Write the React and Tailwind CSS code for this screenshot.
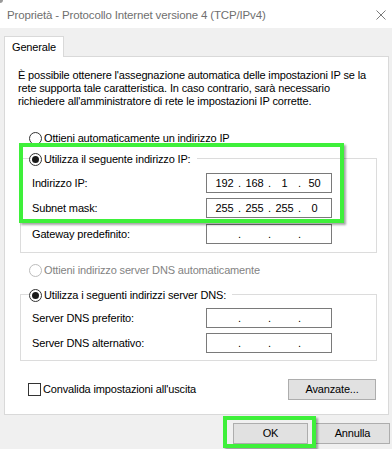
import React from 'react';

const dlg = { fontFamily: '"Liberation Sans", Arial, sans-serif' };

function Radio({ checked, disabled }) {
  return (
    <span
      className={`flex h-[13px] w-[13px] shrink-0 items-center justify-center rounded-full border bg-white ${
        disabled ? 'border-[#bcbcbc]' : 'border-[#333333]'
      }`}
    >
      {checked && <span className="h-[7px] w-[7px] rounded-full bg-[#1a1a1a]" />}
    </span>
  );
}

function IpField({ value }) {
  const parts = value ? value.split('.') : ['', '', '', ''];
  return (
    <div className="flex h-[20px] w-[126px] items-center border border-[#7a7a7a] bg-white pl-[5px] text-[11px] text-black">
      {parts.map((p, i) => (
        <React.Fragment key={i}>
          <span className="w-[25px] text-center">{p}</span>
          {i < 3 && <span className="w-[5px] text-center">.</span>}
        </React.Fragment>
      ))}
    </div>
  );
}

function Row({ label, value, className = '' }) {
  return (
    <div className={`flex items-center justify-between pl-[11px] pr-[44px] ${className}`}>
      <span>{label}</span>
      <IpField value={value} />
    </div>
  );
}

function Legend({ children, disabled, checked }) {
  return (
    <div className="-mt-[7px] ml-[8px] flex h-[14px] w-fit items-center bg-white pr-[6px]">
      <Radio checked={checked} disabled={disabled} />
      <span className="ml-[2px] whitespace-nowrap">{children}</span>
    </div>
  );
}

function Button({ children, className = '' }) {
  return (
    <button
      className={`flex h-[21px] items-center justify-center border border-[#adadad] bg-[#e1e1e1] text-[11px] text-black ${className}`}
    >
      {children}
    </button>
  );
}

export default function App() {
  return (
    <div
      className="relative h-[449px] w-[392px] overflow-hidden bg-[#f0f0f0] text-[11px] leading-[13px] tracking-[-0.15px] text-black"
      style={dlg}
    >
      <span className="absolute left-0 top-0 h-[3px] w-[3px] rounded-br-full bg-[#9a9a9a]" />

      {/* title bar */}
      <div className="flex h-[28px] items-center bg-white pl-[7px] pr-[6px]">
        <span className="mt-[2px] text-[11.5px] text-[#6f6f6f]">
          Proprietà - Protocollo Internet versione 4 (TCP/IPv4)
        </span>
        <svg className="ml-auto mt-[1px]" width="10" height="10" viewBox="0 0 10 10">
          <path d="M0.5 0.5 L9.5 9.5 M9.5 0.5 L0.5 9.5" stroke="#7a7a7a" strokeWidth="1" />
        </svg>
      </div>

      {/* tab */}
      <div className="ml-[4px] mt-[8px] flex">
        <div className="relative z-10 -mb-px flex h-[21px] w-[60px] items-center border border-b-0 border-[#d9d9d9] bg-white pl-[7px]">
          Generale
        </div>
      </div>

      {/* panel */}
      <div className="relative ml-[4px] w-[385px] border border-[#d9d9d9] bg-white pb-[14px]">
        <div className="mt-[12px] pl-[13px]">
          <div className="whitespace-nowrap">È possibile ottenere l'assegnazione automatica delle impostazioni IP se la</div>
          <div className="whitespace-nowrap">rete supporta tale caratteristica. In caso contrario, sarà necessario</div>
          <div className="whitespace-nowrap">richiedere all'amministratore di rete le impostazioni IP corrette.</div>
        </div>

        <div className="ml-[24px] mt-[23px] flex h-[14px] items-center">
          <Radio />
          <span className="ml-[2px]">Ottieni automaticamente un indirizzo IP</span>
        </div>

        <div className="ml-[15px] mt-[13px] w-[357px] border border-[#dcdcdc] pb-[8px]">
          <Legend checked>Utilizza il seguente indirizzo IP:</Legend>
          <Row className="mt-[7px]" label="Indirizzo IP:" value="192.168.1.50" />
          <Row className="mt-[5px]" label="Subnet mask:" value="255.255.255.0" />
          <Row className="mt-[6px]" label="Gateway predefinito:" />
        </div>

        <div className="ml-[24px] mt-[10px] flex h-[14px] items-center text-[#838383]">
          <Radio disabled />
          <span className="ml-[2px]">Ottieni indirizzo server DNS automaticamente</span>
        </div>

        <div className="ml-[15px] mt-[17px] w-[357px] border border-[#dcdcdc] pb-[7px]">
          <Legend checked>Utilizza i seguenti indirizzi server DNS:</Legend>
          <Row className="mt-[6px]" label="Server DNS preferito:" />
          <Row className="mt-[5px]" label="Server DNS alternativo:" />
        </div>

        <div className="ml-[23px] mr-[12px] mt-[18px] flex items-center">
          <span className="h-[13px] w-[13px] border border-[#333333] bg-white" />
          <span className="ml-[2px]">Convalida impostazioni all'uscita</span>
          <Button className="ml-auto w-[88px]">Avanzate...</Button>
        </div>

        {/* highlight */}
        <div className="pointer-events-none absolute left-[14px] top-[86px] h-[80px] w-[325px] border-[4px] border-[#3ef03a] shadow-[2px_2px_2px_rgba(0,0,0,0.35)]" />
      </div>

      {/* dialog buttons */}
      <div className="mt-[8px] flex justify-end gap-[7px] pr-[2px]">
        <div className="relative">
          <Button className="w-[75px]">OK</Button>
          <div className="pointer-events-none absolute -bottom-[4px] -left-[10px] -right-[8px] -top-[7px] border-[4px] border-[#3ef03a] shadow-[2px_2px_2px_rgba(0,0,0,0.35)]" />
        </div>
        <Button className="w-[75px]">Annulla</Button>
      </div>
    </div>
  );
}
